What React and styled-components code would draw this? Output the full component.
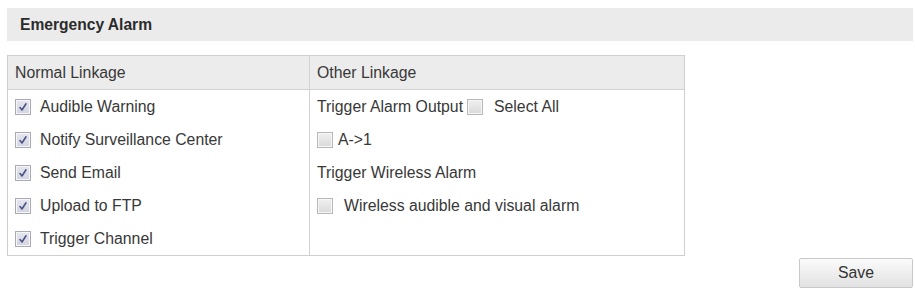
import React from "react";
import styled, { createGlobalStyle } from "styled-components";

const Global = createGlobalStyle`
  html, body { margin: 0; padding: 0; background: #fff; }
  body { font-family: "Liberation Sans", Arial, sans-serif; color: #333; }
`;

const Page = styled.div`
  width: 915px;
  box-sizing: border-box;
  padding: 8px 2px 0 7px;
`;

const TitleBar = styled.div`
  height: 33px;
  background: #ebebeb;
  display: flex;
  align-items: center;
  padding-left: 13px;
  font-size: 15.6px;
  font-weight: bold;
  color: #2b2b2b;
`;

const Table = styled.div`
  margin-top: 14px;
  width: 678px;
  box-sizing: border-box;
  border: 1px solid #cfcfcf;
  display: grid;
  grid-template-columns: 301px 1fr;
  font-size: 15.8px;
`;

const HeadCell = styled.div`
  height: 33px;
  background: #ececec;
  border-bottom: 1px solid #d2d2d2;
  border-left: ${(p) => (p.$divider ? "1px solid #d2d2d2" : "none")};
  display: flex;
  align-items: center;
  padding-left: 7px;
  color: #383838;
`;

const Column = styled.div`
  border-left: ${(p) => (p.$divider ? "1px solid #d2d2d2" : "none")};
  padding-left: 7px;
  display: flex;
  flex-direction: column;
`;

const Row = styled.div`
  height: 33px;
  display: flex;
  align-items: center;
  white-space: nowrap;
  color: #383838;
`;

const Label = styled.span`
  margin-left: ${(p) => p.$gap ?? 0}px;
`;

const Box = styled.span`
  width: 16px;
  height: 16px;
  box-sizing: border-box;
  border: 1px solid ${(p) => (p.$checked ? "#a9a9b8" : "#b8b8b8")};
  background: ${(p) =>
    p.$checked ? "linear-gradient(#e6e6f0, #d4d4e2)" : "linear-gradient(#f0f0f0, #d9d9d9)"};
  display: inline-flex;
  align-items: center;
  justify-content: center;
  margin-left: ${(p) => p.$ml ?? 0}px;
  flex-shrink: 0;
  box-shadow: inset 0 0 0 1px #f6f6f6;
`;

const CheckBox = ({ checked, ml }) => (
  <Box $ml={ml} $checked={checked}>
    {checked && (
      <svg width="12" height="12" viewBox="0 0 12 12">
        <path d="M3 6.5 L5 9 L9 2.8" fill="none" stroke="#4a5585" strokeWidth="1.6" strokeLinecap="round" strokeLinejoin="round" />
      </svg>
    )}
  </Box>
);

const Footer = styled.div`
  display: flex;
  justify-content: flex-end;
  margin-top: 2px;
`;

const SaveButton = styled.button`
  width: 114px;
  height: 30px;
  border: 1px solid #c8c8c8;
  border-radius: 2px;
  background: linear-gradient(#fbfbfb, #e2e2e2);
  font-family: "Liberation Sans", Arial, sans-serif;
  font-size: 15.8px;
  color: #333;
  padding: 0;
`;

const normal = ["Audible Warning", "Notify Surveillance Center", "Send Email", "Upload to FTP", "Trigger Channel"];

export default function App() {
  return (
    <Page>
      <Global />
      <TitleBar>Emergency Alarm</TitleBar>
      <Table>
        <HeadCell>Normal Linkage</HeadCell>
        <HeadCell $divider>Other Linkage</HeadCell>
        <Column>
          {normal.map((t) => (
            <Row key={t}>
              <CheckBox checked />
              <Label $gap={9}>{t}</Label>
            </Row>
          ))}
        </Column>
        <Column $divider>
          <Row>
            <Label>Trigger Alarm Output</Label>
            <CheckBox ml={4} />
            <Label $gap={11}>Select All</Label>
          </Row>
          <Row>
            <CheckBox />
            <Label $gap={5}>A-&gt;1</Label>
          </Row>
          <Row>
            <Label>Trigger Wireless Alarm</Label>
          </Row>
          <Row>
            <CheckBox />
            <Label $gap={11}>Wireless audible and visual alarm</Label>
          </Row>
        </Column>
      </Table>
      <Footer>
        <SaveButton>Save</SaveButton>
      </Footer>
    </Page>
  );
}
